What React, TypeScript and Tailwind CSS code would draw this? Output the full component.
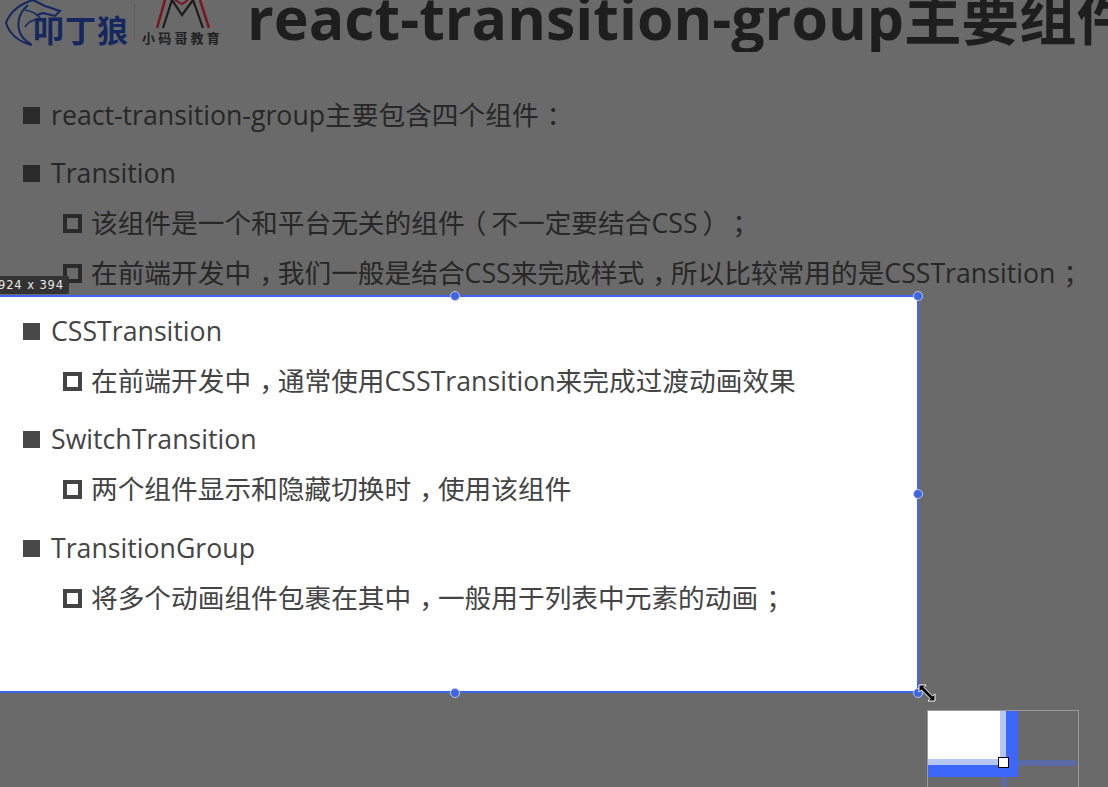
const punct = /([，；：（）])/;

// Fullwidth marks sit centred in their cell on the slide, so nudge them off the cell edge
function Mark({ char }: { char: string }) {
  const nudge = char === "（" ? "-ml-[5px] mr-[5px]" : char === "）" ? "ml-[5px] -mr-[5px]" : "ml-[8px] -mr-[8px]";
  return <span className={nudge}>{char}</span>;
}

function Row({ level, text, lit }: { level: 1 | 2; text: string; lit?: boolean }) {
  const tone = lit ? "text-[#444444]" : "text-[#272727]";
  const fill = lit ? "bg-[#484848]" : "bg-[#2a2a2a]";
  const line = lit ? "border-[#444444]" : "border-[#2a2a2a]";
  return (
    <div className={`flex items-center whitespace-nowrap h-[30px] text-[26.7px] leading-[30px] [text-spacing-trim:space-all] ${tone} ${level === 1 ? "pl-[23px] gap-[11px]" : "pl-[63px] gap-[9px]"}`}>
      {level === 1 ? (
        <span className={`w-[17px] h-[17px] shrink-0 ${fill}`} />
      ) : (
        <span className={`w-[19px] h-[19px] shrink-0 border-[4px] ${line}`} />
      )}
      <span>
        {text.split(punct).map((part, i) => (punct.test(part) ? <Mark key={i} char={part} /> : part))}
      </span>
    </div>
  );
}

function Handle({ className }: { className: string }) {
  return <span className={`absolute w-[10px] h-[10px] rounded-full bg-[#3f66e0] border border-[#b9c8f5] ${className}`} />;
}

export default function App() {
  return (
    <div className="relative w-[1108px] h-[787px] overflow-hidden bg-[#6a6a6a] font-['Open_Sans','Noto_Sans_CJK_SC',sans-serif]">
      {/* selection box */}
      <div className="absolute left-[-4px] top-[295px] w-[923px] h-[398px] bg-white border-2 border-[#3f66ee]">
        <Handle className="left-[452px] top-[-6px]" />
        <Handle className="left-[915px] top-[-6px]" />
        <Handle className="left-[915px] top-[192px]" />
        <Handle className="left-[452px] top-[391px]" />
        <Handle className="left-[915px] top-[391px]" />
      </div>

      <header className="relative flex items-start h-[52px] overflow-hidden">
        <div className="relative w-[130px] h-[46px] shrink-0 pl-[33px] pt-[11px]">
          <svg viewBox="0 0 130 46" className="absolute inset-0 w-[130px] h-[46px]" fill="none">
            <path d="M32 45C18 42 9 33 6 23 10 12 20 4 33 0" stroke="#14275f" strokeWidth="2" />
            <path d="M33 0l12 6 15 5-5 5-12-3-6 2" stroke="#14275f" strokeWidth="2" />
            <path d="M28 5C20 12 17 20 19 30c2 7 6 11 12 14" stroke="#14275f" strokeWidth="2" />
            <path d="M25 10c7 1 12 4 16 9-8 0-13 3-16 8" stroke="#14275f" strokeWidth="1.5" />
          </svg>
          <span className="relative block text-[31px] leading-[36px] font-bold text-[#14275f] tracking-[1px] font-['Noto_Sans_CJK_SC',sans-serif]">叩丁狼</span>
        </div>
        <span className="w-px h-[36px] mt-[4px] ml-[4px] bg-[#5a5a5a] shrink-0" />
        <div className="flex flex-col w-[84px] ml-[7px] shrink-0">
          <svg viewBox="142 0 84 29" className="w-[84px] h-[29px]" fill="none">
            <path d="M157 28L165 0M209 28L200 0" stroke="#7a1620" strokeWidth="2.5" />
            <path d="M163 28L172 0l10 15 11-15 10 28" stroke="#1c1c1c" strokeWidth="2.2" />
            <path d="M175 0l7 4 6-4" stroke="#7a1620" strokeWidth="2" />
          </svg>
          <span className="text-[13px] leading-[18px] font-bold tracking-[3.2px] text-[#1f1f1f] whitespace-nowrap font-['Noto_Sans_CJK_SC',sans-serif]">小码哥教育</span>
        </div>
        <h1 className="ml-[21px] mt-[-17px] text-[59px] leading-[68px] font-bold text-[#1e1e1e] whitespace-nowrap">
          react-transition-group<span className="text-[57.5px]">主要组件</span>
        </h1>
      </header>

      <main className="relative flex flex-col gap-[28px] pt-[48px]">
        <Row level={1} text="react-transition-group主要包含四个组件：" />
        <section className="flex flex-col gap-[20px]">
          <Row level={1} text="Transition" />
          <Row level={2} text="该组件是一个和平台无关的组件（不一定要结合CSS）；" />
          <Row level={2} text="在前端开发中，我们一般是结合CSS来完成样式，所以比较常用的是CSSTransition；" />
        </section>
        <section className="flex flex-col gap-[20px]">
          <Row level={1} lit text="CSSTransition" />
          <Row level={2} lit text="在前端开发中，通常使用CSSTransition来完成过渡动画效果" />
        </section>
        <section className="flex flex-col gap-[20px]">
          <Row level={1} lit text="SwitchTransition" />
          <Row level={2} lit text="两个组件显示和隐藏切换时，使用该组件" />
        </section>
        <section className="flex flex-col gap-[20px] pt-px">
          <Row level={1} lit text="TransitionGroup" />
          <Row level={2} lit text="将多个动画组件包裹在其中，一般用于列表中元素的动画；" />
        </section>
      </main>

      {/* size label */}
      <div className="absolute left-[-7px] top-[276px] w-[76px] h-[18px] rounded-[2px] bg-[#333333] text-[#e8e8e8] text-[11.5px] leading-[18px] tracking-[0.9px] text-center font-['DejaVu_Sans',sans-serif] whitespace-nowrap">
        924 x 394
      </div>

      {/* resize cursor */}
      <svg viewBox="0 0 20 20" className="absolute left-[917px] top-[683px] w-[20px] h-[20px]">
        <path d="M2 2h7L7 4.5 15.5 13 18 11v7h-7l2-2.5L4.5 7 2 9z" fill="#000" stroke="#fff" strokeWidth="1" />
      </svg>

      {/* magnifier */}
      <div className="absolute left-[927px] top-[710px] w-[152px] h-[80px] flex items-start border border-[#9a9a9a] overflow-hidden">
        <div className="w-[90px] h-[66px] shrink-0 border-r-[12px] border-b-[12px] border-[#3d66fb]">
          <div className="w-full h-full bg-white border-r-[6px] border-b-[6px] border-[#b6c6f5]" />
        </div>
        <div className="w-[58px] h-[6px] mt-[49px] bg-[#5a6ba8]" />
        <div className="absolute left-[70px] top-[46px] w-[11px] h-[11px] bg-white border border-black" />
        <div className="absolute left-[74px] top-[66px] w-[5px] h-[12px] bg-[#5a6ba8]" />
      </div>
    </div>
  );
}
